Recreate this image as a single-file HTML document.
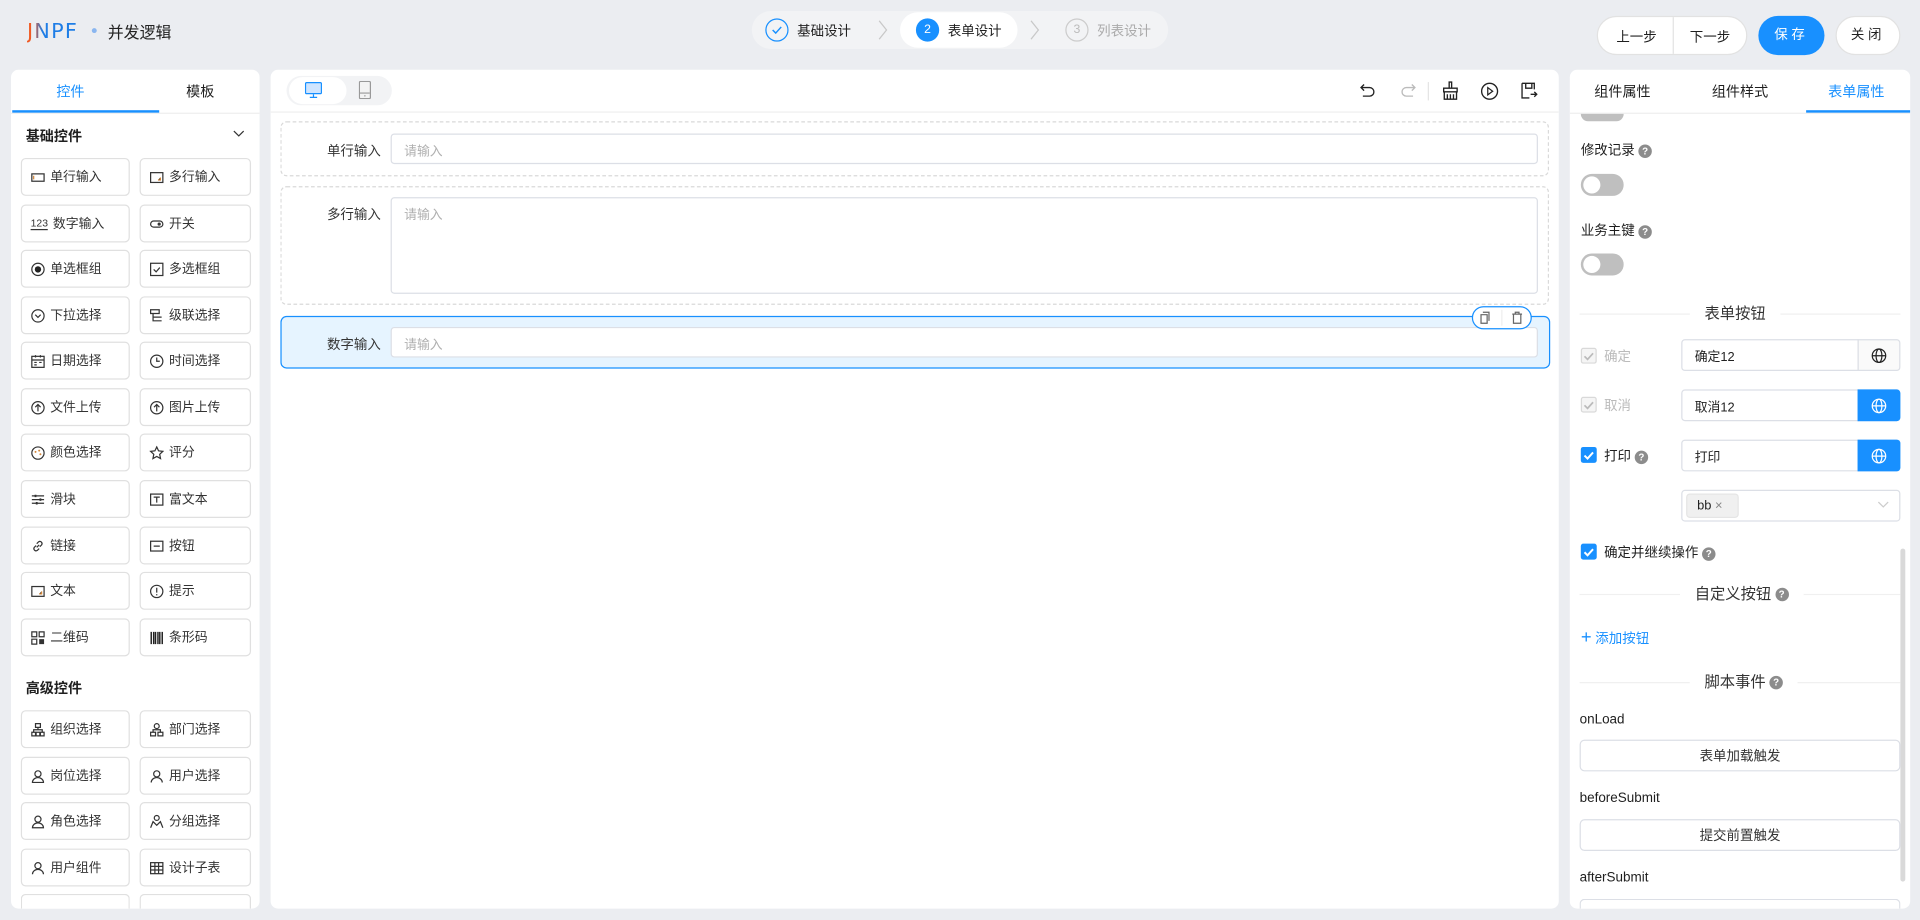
<!DOCTYPE html>
<html><head><meta charset="utf-8">
<style>
*{box-sizing:border-box;margin:0;padding:0}
html,body{width:1920px;height:919px;overflow:hidden;background:#ebedf1}
body{font-family:"Liberation Sans","Noto Sans CJK SC",sans-serif;color:#1f1f1f}
#w{position:absolute;left:0;top:0;width:1568px;height:751px;transform:scale(1.22449);transform-origin:0 0;font-size:11px}
.a{position:absolute}
.panel{position:absolute;background:#fff;border-radius:6px;overflow:hidden}
.btn{position:absolute;background:#fff;border:1px solid #dcdfe6;border-radius:4px;display:flex;align-items:center;font-size:11px;color:#333}
.item{position:absolute;height:31px;border:1px solid #e0e0e0;border-radius:4px;display:flex;align-items:center;padding-left:7px;font-size:10.5px;color:#333;background:#fff}
.item svg{width:12px;height:12px;margin-right:4px;flex:none}
.inp{position:absolute;border:1px solid #dcdfe6;border-radius:3px;background:#fff;color:#b0b0b0;font-size:10.5px;padding:6px 10px}
.lbl{position:absolute;font-size:11px;color:#333;text-align:right;width:80px}
.q{display:inline-block;width:11px;height:11px;border-radius:50%;background:#8c8c8c;color:#fff;font-size:8px;line-height:11px;text-align:center;vertical-align:middle;margin-left:3px;font-weight:bold}
.sw{position:absolute;width:35px;height:18px;border-radius:9px;background:#bfbfbf}
.sw:after{content:"";position:absolute;left:2px;top:2px;width:14px;height:14px;border-radius:50%;background:#fff}
.chk{position:absolute;width:13px;height:13px;border-radius:2px;display:flex;align-items:center;justify-content:center}
.div{position:absolute;left:1290px;width:262px;height:1px;background:#f0f0f0}
.dt{position:absolute;background:#fff;padding:0 12px;font-size:12.5px;color:#333;top:-8px;line-height:16px;white-space:nowrap}
</style></head><body><div id="w">

<!-- header -->
<div class="a" style="left:22px;top:16px;font-size:17px;letter-spacing:1px;background:linear-gradient(90deg,#f05a24,#f05a24 12%,#1e7de6 30%,#1e7de6);-webkit-background-clip:text;color:transparent;font-family:'DejaVu Sans',sans-serif">JNPF</div>
<div class="a" style="left:75px;top:23px;width:4px;height:4px;border-radius:50%;background:#8ab6f0"></div>
<div class="a" style="left:88px;top:16px;font-size:13px;color:#222">并发逻辑</div>

<div class="a" style="left:614px;top:9px;width:340px;height:31px;border-radius:16px;background:#f2f3f5"></div>
<div class="a" style="left:735px;top:10px;width:96px;height:29px;border-radius:15px;background:#fff"></div>
<div class="a" style="left:625px;top:15px;width:19px;height:19px;border-radius:50%;border:1px solid #1890ff"></div>
<svg class="a" style="left:629px;top:19px" width="11" height="11" viewBox="0 0 11 11"><path d="M2 5.5l2.5 2.5 4.5-5" stroke="#1890ff" stroke-width="1.2" fill="none"/></svg>
<div class="a" style="left:651px;top:17px;font-size:11px">基础设计</div>
<svg class="a" style="left:717px;top:16px" width="8" height="17"><path d="M1 1l6 7.5-6 7.5" stroke="#c8c8c8" fill="none"/></svg>
<div class="a" style="left:748px;top:15px;width:19px;height:19px;border-radius:50%;background:#1890ff;color:#fff;font-size:10px;text-align:center;line-height:19px">2</div>
<div class="a" style="left:774px;top:17px;font-size:11px">表单设计</div>
<svg class="a" style="left:841px;top:16px" width="8" height="17"><path d="M1 1l6 7.5-6 7.5" stroke="#c8c8c8" fill="none"/></svg>
<div class="a" style="left:870px;top:15px;width:19px;height:19px;border-radius:50%;border:1px solid #ccc;color:#bbb;font-size:10px;text-align:center;line-height:17px">3</div>
<div class="a" style="left:896px;top:17px;font-size:11px;color:#aaa">列表设计</div>

<div class="a" style="left:1304px;top:13px;width:123px;height:32px;border-radius:16px;background:#fff;border:1px solid #e2e2e2"></div>
<div class="a" style="left:1366px;top:14px;width:1px;height:30px;background:#e2e2e2"></div>
<div class="a" style="left:1320px;top:22px;font-size:11px">上一步</div>
<div class="a" style="left:1380px;top:22px;font-size:11px">下一步</div>
<div class="a" style="left:1436px;top:13px;width:54px;height:32px;border-radius:16px;background:#1890ff;color:#fff;font-size:11px;text-align:center;line-height:32px;letter-spacing:3px">保存</div>
<div class="a" style="left:1499px;top:13px;width:53px;height:32px;border-radius:16px;background:#fff;border:1px solid #e2e2e2;font-size:11px;text-align:center;line-height:30px;letter-spacing:3px">关闭</div>

<!-- left panel -->
<div class="panel" style="left:9px;top:57px;width:203px;height:685px">
 <div class="a" style="left:0;top:35px;width:203px;height:1px;background:#eee"></div>
 <div class="a" style="left:1px;top:33px;width:120px;height:2px;background:#1890ff"></div>
 <div class="a" style="left:37px;top:10px;font-size:11.5px;color:#1890ff">控件</div>
 <div class="a" style="left:143px;top:10px;font-size:11.5px">模板</div>
 <div class="a" style="left:12px;top:46px;font-size:11.5px;font-weight:bold">基础控件</div>
 <svg class="a" style="left:181px;top:49px" width="10" height="7"><path d="M1 1l4 4 4-4" stroke="#333" fill="none"/></svg>
 <div class="a" style="left:12px;top:497px;font-size:11.5px;font-weight:bold">高级控件</div>
</div>

<!-- center panel -->
<div class="panel" style="left:221px;top:57px;width:1052px;height:685px">
 <div class="a" style="left:0;top:34px;width:1052px;height:1px;background:#eee"></div>
 <div class="a" style="left:13px;top:5px;width:86px;height:24px;border-radius:12px;background:#f2f3f5"></div>
 <div class="a" style="left:15px;top:6px;width:47px;height:22px;border-radius:11px;background:#fff"></div>
 <svg class="a" style="left:28px;top:10px" width="14" height="13" viewBox="0 0 14 13"><rect x="0.5" y="0.5" width="13" height="9" rx="1" fill="#cfe5ff" stroke="#1890ff"/><path d="M7 10v2M4 12.5h6" stroke="#1890ff"/></svg>
 <svg class="a" style="left:72px;top:9px" width="10" height="15" viewBox="0 0 10 15"><rect x="0.5" y="0.5" width="9" height="14" rx="1" fill="#f3f3f3" stroke="#999"/><path d="M1 10h8" stroke="#999"/><circle cx="5" cy="12.3" r=".6" fill="#999"/></svg>
 <svg class="a" style="left:889px;top:10px" width="14" height="14" viewBox="0 0 14 14"><path d="M4 2L1.5 4.5 4 7M1.5 4.5h7a3.5 3.5 0 010 7H3" stroke="#222" stroke-width="1.1" fill="none"/></svg>
 <svg class="a" style="left:922px;top:10px" width="14" height="14" viewBox="0 0 14 14"><path d="M10 2l2.5 2.5L10 7M12.5 4.5h-7a3.5 3.5 0 000 7H11" stroke="#bbb" stroke-width="1.1" fill="none"/></svg>
 <div class="a" style="left:945px;top:10px;width:1px;height:15px;background:#e5e5e5"></div>
 <svg class="a" style="left:956px;top:9px" width="15" height="16" viewBox="0 0 15 16"><path d="M6.5 1h2v5h-2zM2 6h11v3H2zM2.5 9h10v6h-10zM5 11v4M7.5 11v4M10 11v4" stroke="#222" stroke-width="1.1" fill="none"/></svg>
 <svg class="a" style="left:988px;top:10px" width="15" height="15" viewBox="0 0 15 15"><circle cx="7.5" cy="7.5" r="6.5" stroke="#222" stroke-width="1.1" fill="none"/><path d="M6 4.5v6l4-3z" stroke="#222" fill="none"/></svg>
 <svg class="a" style="left:1021px;top:10px" width="14" height="14" viewBox="0 0 14 14"><path d="M1 1h10v5M1 1v12h6M4 1v4h5V1" stroke="#222" stroke-width="1.1" fill="none"/><path d="M8 10h5M11 8l2 2-2 2" stroke="#222" stroke-width="1.1" fill="none"/></svg>

 <div class="a" style="left:8px;top:42px;width:1036px;height:45px;border:1px dashed #d9d9d9;border-radius:5px"></div>
 <div class="lbl" style="left:10px;top:58px">单行输入</div>
 <div class="inp" style="left:98px;top:52px;width:937px;height:25px">请输入</div>
 <div class="a" style="left:8px;top:95px;width:1036px;height:97px;border:1px dashed #d9d9d9;border-radius:5px"></div>
 <div class="lbl" style="left:10px;top:110px">多行输入</div>
 <div class="inp" style="left:98px;top:104px;width:937px;height:79px">请输入</div>
 <div class="a" style="left:8px;top:201px;width:1037px;height:43px;border:1px solid #1890ff;border-radius:5px;background:#e6f4ff"></div>
 <div class="lbl" style="left:10px;top:216px">数字输入</div>
 <div class="inp" style="left:98px;top:210px;width:937px;height:25px">请输入</div>
 <div class="a" style="left:981px;top:193px;width:49px;height:19px;border:1px solid #1890ff;border-radius:10px;background:#fff"></div>
 <div class="a" style="left:1005px;top:196px;width:1px;height:13px;background:#eee"></div>
 <svg class="a" style="left:987px;top:197px" width="10" height="11" viewBox="0 0 10 11"><path d="M3 1h5v7M1.5 3h5v7h-5z" stroke="#666" fill="none"/></svg>
 <svg class="a" style="left:1013px;top:197px" width="10" height="11" viewBox="0 0 10 11"><path d="M1 2.5h8M3.5 2.5V1h3v1.5M2 2.5v7.5h6V2.5" stroke="#666" fill="none"/></svg>
</div>

<!-- right panel -->
<div class="panel" style="left:1282px;top:57px;width:278px;height:685px">
 <div class="a" style="left:0;top:35px;width:278px;height:1px;background:#eee"></div>
 <div class="a" style="left:193px;top:33px;width:85px;height:2px;background:#1890ff"></div>
 <div class="a" style="left:20px;top:10px;font-size:11.5px">组件属性</div>
 <div class="a" style="left:116px;top:10px;font-size:11.5px">组件样式</div>
 <div class="a" style="left:211px;top:10px;font-size:11.5px;color:#1890ff">表单属性</div>
 <div class="a" style="left:9px;top:36px;width:35px;height:6px;border-radius:0 0 9px 9px;background:#bfbfbf"></div>
 <div class="a" style="left:270px;top:391px;width:4px;height:272px;border-radius:2px;background:#d9d9d9"></div>
</div>
<div class="a" style="left:1291px;top:114px;font-size:11px">修改记录<span class="q">?</span></div>
<div class="sw" style="left:1291px;top:142px"></div>
<div class="a" style="left:1291px;top:180px;font-size:11px">业务主键<span class="q">?</span></div>
<div class="sw" style="left:1291px;top:207px"></div>
<div class="div" style="top:256px"><span class="dt" style="left:90px">表单按钮</span></div>

<div class="chk" style="left:1291px;top:284px;border:1px solid #d9d9d9;background:#f5f5f5"><svg width="9" height="8"><path d="M1 4l2.5 2.5L8 1.5" stroke="#bbb" stroke-width="1.4" fill="none"/></svg></div>
<div class="a" style="left:1310px;top:283px;color:#bbb">确定</div>
<div class="inp" style="left:1373px;top:277px;width:145px;height:26px;color:#222;border-radius:3px 0 0 3px">确定12</div>
<div class="a" style="left:1517px;top:277px;width:35px;height:26px;border:1px solid #dcdfe6;border-radius:0 3px 3px 0;background:#fafafa;display:flex;align-items:center;justify-content:center"><svg width="13" height="13" viewBox="0 0 13 13"><circle cx="6.5" cy="6.5" r="5.5" stroke="#222" fill="none"/><ellipse cx="6.5" cy="6.5" rx="2.4" ry="5.5" stroke="#222" fill="none"/><path d="M1 6.5h11" stroke="#222"/></svg></div>

<div class="chk" style="left:1291px;top:324px;border:1px solid #d9d9d9;background:#f5f5f5"><svg width="9" height="8"><path d="M1 4l2.5 2.5L8 1.5" stroke="#bbb" stroke-width="1.4" fill="none"/></svg></div>
<div class="a" style="left:1310px;top:323px;color:#bbb">取消</div>
<div class="inp" style="left:1373px;top:318px;width:145px;height:26px;color:#222;border-radius:3px 0 0 3px">取消12</div>
<div class="a" style="left:1517px;top:318px;width:35px;height:26px;border-radius:0 3px 3px 0;background:#1890ff;display:flex;align-items:center;justify-content:center"><svg width="13" height="13" viewBox="0 0 13 13"><circle cx="6.5" cy="6.5" r="5.5" stroke="#fff" fill="none"/><ellipse cx="6.5" cy="6.5" rx="2.4" ry="5.5" stroke="#fff" fill="none"/><path d="M1 6.5h11" stroke="#fff"/></svg></div>

<div class="chk" style="left:1291px;top:365px;background:#1890ff"><svg width="9" height="8"><path d="M1 4l2.5 2.5L8 1.5" stroke="#fff" stroke-width="1.6" fill="none"/></svg></div>
<div class="a" style="left:1310px;top:364px">打印<span class="q">?</span></div>
<div class="inp" style="left:1373px;top:359px;width:145px;height:26px;color:#222;border-radius:3px 0 0 3px">打印</div>
<div class="a" style="left:1517px;top:359px;width:35px;height:26px;border-radius:0 3px 3px 0;background:#1890ff;display:flex;align-items:center;justify-content:center"><svg width="13" height="13" viewBox="0 0 13 13"><circle cx="6.5" cy="6.5" r="5.5" stroke="#fff" fill="none"/><ellipse cx="6.5" cy="6.5" rx="2.4" ry="5.5" stroke="#fff" fill="none"/><path d="M1 6.5h11" stroke="#fff"/></svg></div>

<div class="inp" style="left:1373px;top:400px;width:179px;height:26px"></div>
<div class="a" style="left:1377px;top:403px;width:43px;height:20px;background:#f0f0f0;border:1px solid #e5e5e5;border-radius:3px;font-size:10.5px;color:#222;padding:3px 0 0 8px">bb <span style="color:#888">×</span></div>
<svg class="a" style="left:1533px;top:409px" width="10" height="7"><path d="M1 1l4 4 4-4" stroke="#ccc" fill="none"/></svg>

<div class="chk" style="left:1291px;top:444px;background:#1890ff"><svg width="9" height="8"><path d="M1 4l2.5 2.5L8 1.5" stroke="#fff" stroke-width="1.6" fill="none"/></svg></div>
<div class="a" style="left:1310px;top:443px">确定并继续操作<span class="q">?</span></div>
<div class="div" style="top:485px"><span class="dt" style="left:82px">自定义按钮<span class="q">?</span></span></div>
<div class="a" style="left:1291px;top:513px;color:#1890ff"><span style="font-size:15px;line-height:11px;font-weight:300">+</span> 添加按钮</div>
<div class="div" style="top:557px"><span class="dt" style="left:90px">脚本事件<span class="q">?</span></span></div>
<div class="a" style="left:1290px;top:582px">onLoad</div>
<div class="btn" style="left:1290px;top:604px;width:262px;height:26px;justify-content:center">表单加载触发</div>
<div class="a" style="left:1290px;top:646px">beforeSubmit</div>
<div class="btn" style="left:1290px;top:669px;width:262px;height:26px;justify-content:center">提交前置触发</div>
<div class="a" style="left:1290px;top:711px">afterSubmit</div>
<div class="a" style="left:1290px;top:734px;width:262px;height:8px;border:1px solid #dcdfe6;border-bottom:none;border-radius:4px 4px 0 0;background:#fff"></div>

<!-- left items -->
<div style="position:absolute;left:0;top:0">
<div class="item" style="left:17px;top:129px;width:89px"><svg viewBox="0 0 12 12"><rect x="1" y="3" width="10" height="6" stroke="#333" fill="none"/><path d="M2.5 4.5v3" stroke="#d4873a"/></svg>单行输入</div>
<div class="item" style="left:114px;top:129px;width:91px"><svg viewBox="0 0 12 12"><rect x="1" y="2" width="10" height="8" stroke="#333" fill="none"/><path d="M7 8h2V6" stroke="#d4873a"/></svg>多行输入</div>
<div class="item" style="left:17px;top:167px;width:89px"><span style="font-size:8.5px;margin-right:4px;border-bottom:1px solid #333;line-height:9px">123</span>数字输入</div>
<div class="item" style="left:114px;top:167px;width:91px"><svg viewBox="0 0 12 12"><rect x="1" y="3.5" width="10" height="5" rx="2.5" stroke="#333" fill="none"/><circle cx="8" cy="6" r="1.3" fill="#333"/></svg>开关</div>
<div class="item" style="left:17px;top:204px;width:89px"><svg viewBox="0 0 12 12"><circle cx="6" cy="6" r="5" stroke="#333" fill="none"/><circle cx="6" cy="6" r="2.6" fill="#222"/></svg>单选框组</div>
<div class="item" style="left:114px;top:204px;width:91px"><svg viewBox="0 0 12 12"><rect x="1" y="1" width="10" height="10" stroke="#333" fill="none"/><path d="M3.5 6l2 2 3-3.5" stroke="#333" fill="none"/></svg>多选框组</div>
<div class="item" style="left:17px;top:242px;width:89px"><svg viewBox="0 0 12 12"><circle cx="6" cy="6" r="5" stroke="#333" fill="none"/><path d="M3.8 5l2.2 2.2L8.2 5" stroke="#333" fill="none"/></svg>下拉选择</div>
<div class="item" style="left:114px;top:242px;width:91px"><svg viewBox="0 0 12 12"><path d="M1 1h7v3H1zM3 4v6h7M3 7h7" stroke="#333" fill="none"/></svg>级联选择</div>
<div class="item" style="left:17px;top:279px;width:89px"><svg viewBox="0 0 12 12"><rect x="1" y="2" width="10" height="9" stroke="#333" fill="none"/><path d="M1 5h10M4 1v2M8 1v2M3 7h2M7 7h2M3 9h2" stroke="#333"/></svg>日期选择</div>
<div class="item" style="left:114px;top:279px;width:91px"><svg viewBox="0 0 12 12"><circle cx="6" cy="6" r="5" stroke="#333" fill="none"/><path d="M6 3v3h2.5" stroke="#333" fill="none"/></svg>时间选择</div>
<div class="item" style="left:17px;top:317px;width:89px"><svg viewBox="0 0 12 12"><circle cx="6" cy="6" r="5" stroke="#333" fill="none"/><path d="M6 9V3.5M3.8 5.5L6 3.3l2.2 2.2" stroke="#333" fill="none"/></svg>文件上传</div>
<div class="item" style="left:114px;top:317px;width:91px"><svg viewBox="0 0 12 12"><circle cx="6" cy="6" r="5" stroke="#333" fill="none"/><path d="M6 9V3.5M3.8 5.5L6 3.3l2.2 2.2" stroke="#333" fill="none"/></svg>图片上传</div>
<div class="item" style="left:17px;top:354px;width:89px"><svg viewBox="0 0 12 12"><circle cx="6" cy="6" r="5" stroke="#333" fill="none"/><circle cx="4" cy="5" r=".8" fill="#d4873a"/><circle cx="7" cy="4" r=".8" fill="#d4873a"/><circle cx="8" cy="7" r=".8" fill="#d4873a"/></svg>颜色选择</div>
<div class="item" style="left:114px;top:354px;width:91px"><svg viewBox="0 0 12 12"><path d="M6 1l1.5 3.2 3.5.4-2.6 2.4.7 3.5L6 8.8 2.9 10.5l.7-3.5L1 4.6l3.5-.4z" stroke="#333" fill="none"/></svg>评分</div>
<div class="item" style="left:17px;top:392px;width:89px"><svg viewBox="0 0 12 12"><path d="M1 3h10M1 6h10M1 9h10" stroke="#333"/><path d="M4 2v2M8 5v2M5 8v2" stroke="#333" stroke-width="1.5"/></svg>滑块</div>
<div class="item" style="left:114px;top:392px;width:91px"><svg viewBox="0 0 12 12"><rect x="1" y="1.5" width="10" height="9" stroke="#333" fill="none"/><path d="M3.5 4h5M6 4v4.5" stroke="#333"/></svg>富文本</div>
<div class="item" style="left:17px;top:430px;width:89px"><svg viewBox="0 0 12 12"><path d="M5 7l2-2M4.5 5.5L3 7a1.8 1.8 0 002.5 2.5L7 8M7.5 6.5L9 5a1.8 1.8 0 00-2.5-2.5L5 4" stroke="#333" fill="none"/></svg>链接</div>
<div class="item" style="left:114px;top:430px;width:91px"><svg viewBox="0 0 12 12"><rect x="1" y="2" width="10" height="8" stroke="#333" fill="none"/><path d="M3.5 6h5" stroke="#333"/></svg>按钮</div>
<div class="item" style="left:17px;top:467px;width:89px"><svg viewBox="0 0 12 12"><rect x="1" y="2" width="10" height="8" stroke="#333" fill="none"/><path d="M7 8h2V6" stroke="#d4873a"/></svg>文本</div>
<div class="item" style="left:114px;top:467px;width:91px"><svg viewBox="0 0 12 12"><circle cx="6" cy="6" r="5" stroke="#333" fill="none"/><path d="M6 3v4M6 8.2v1" stroke="#333"/></svg>提示</div>
<div class="item" style="left:17px;top:505px;width:89px"><svg viewBox="0 0 12 12"><path d="M1 1h4v4H1zM7 1h4v4H7zM1 7h4v4H1z" stroke="#333" fill="none"/><path d="M7 7h4v4H7z" fill="#333"/></svg>二维码</div>
<div class="item" style="left:114px;top:505px;width:91px"><svg viewBox="0 0 12 12"><path d="M1.5 1v10M3.5 1v10M5 1v10M7 1v10M8.5 1v10M10.5 1v10" stroke="#222" stroke-width="1.2"/></svg>条形码</div>
<div class="item" style="left:17px;top:580px;width:89px"><svg viewBox="0 0 12 12"><path d="M4 1h4v3H4zM1 8h3v3H1zM4.5 8h3v3h-3zM8 8h3v3H8zM6 4v2M2.5 8V6h7v2" stroke="#333" fill="none"/></svg>组织选择</div>
<div class="item" style="left:114px;top:580px;width:91px"><svg viewBox="0 0 12 12"><circle cx="6" cy="3" r="2" stroke="#333" fill="none"/><path d="M1 8h4v3H1zM7 8h4v3H7zM3 8V6h6v2" stroke="#333" fill="none"/></svg>部门选择</div>
<div class="item" style="left:17px;top:618px;width:89px"><svg viewBox="0 0 12 12"><circle cx="6" cy="4" r="2.5" stroke="#333" fill="none"/><path d="M1.5 11a4.5 4 0 019 0z" stroke="#333" fill="none"/></svg>岗位选择</div>
<div class="item" style="left:114px;top:618px;width:91px"><svg viewBox="0 0 12 12"><circle cx="6" cy="4" r="2.5" stroke="#333" fill="none"/><path d="M1.5 11a4.5 4 0 019 0" stroke="#333" fill="none"/></svg>用户选择</div>
<div class="item" style="left:17px;top:655px;width:89px"><svg viewBox="0 0 12 12"><circle cx="6" cy="4" r="2.5" stroke="#333" fill="none"/><path d="M1.5 11a4.5 4 0 019 0z" stroke="#333" fill="none"/></svg>角色选择</div>
<div class="item" style="left:114px;top:655px;width:91px"><svg viewBox="0 0 12 12"><circle cx="6" cy="3" r="2" stroke="#333" fill="none"/><path d="M1 11l2-5 3 3 3-3 2 5" stroke="#333" fill="none"/></svg>分组选择</div>
<div class="item" style="left:17px;top:693px;width:89px"><svg viewBox="0 0 12 12"><circle cx="6" cy="4" r="2.5" stroke="#333" fill="none"/><path d="M1.5 11a4.5 4 0 019 0" stroke="#333" fill="none"/></svg>用户组件</div>
<div class="item" style="left:114px;top:693px;width:91px"><svg viewBox="0 0 12 12"><rect x="1" y="1.5" width="10" height="9" stroke="#333" fill="none"/><path d="M1 4.5h10M1 7.5h10M4.5 1.5v9M7.5 1.5v9" stroke="#333"/></svg>设计子表</div>
<div class="item" style="left:17px;top:730px;width:89px;height:12px;border-bottom:none;border-radius:4px 4px 0 0"></div>
<div class="item" style="left:114px;top:730px;width:91px;height:12px;border-bottom:none;border-radius:4px 4px 0 0"></div>
</div>

</div></body></html>
